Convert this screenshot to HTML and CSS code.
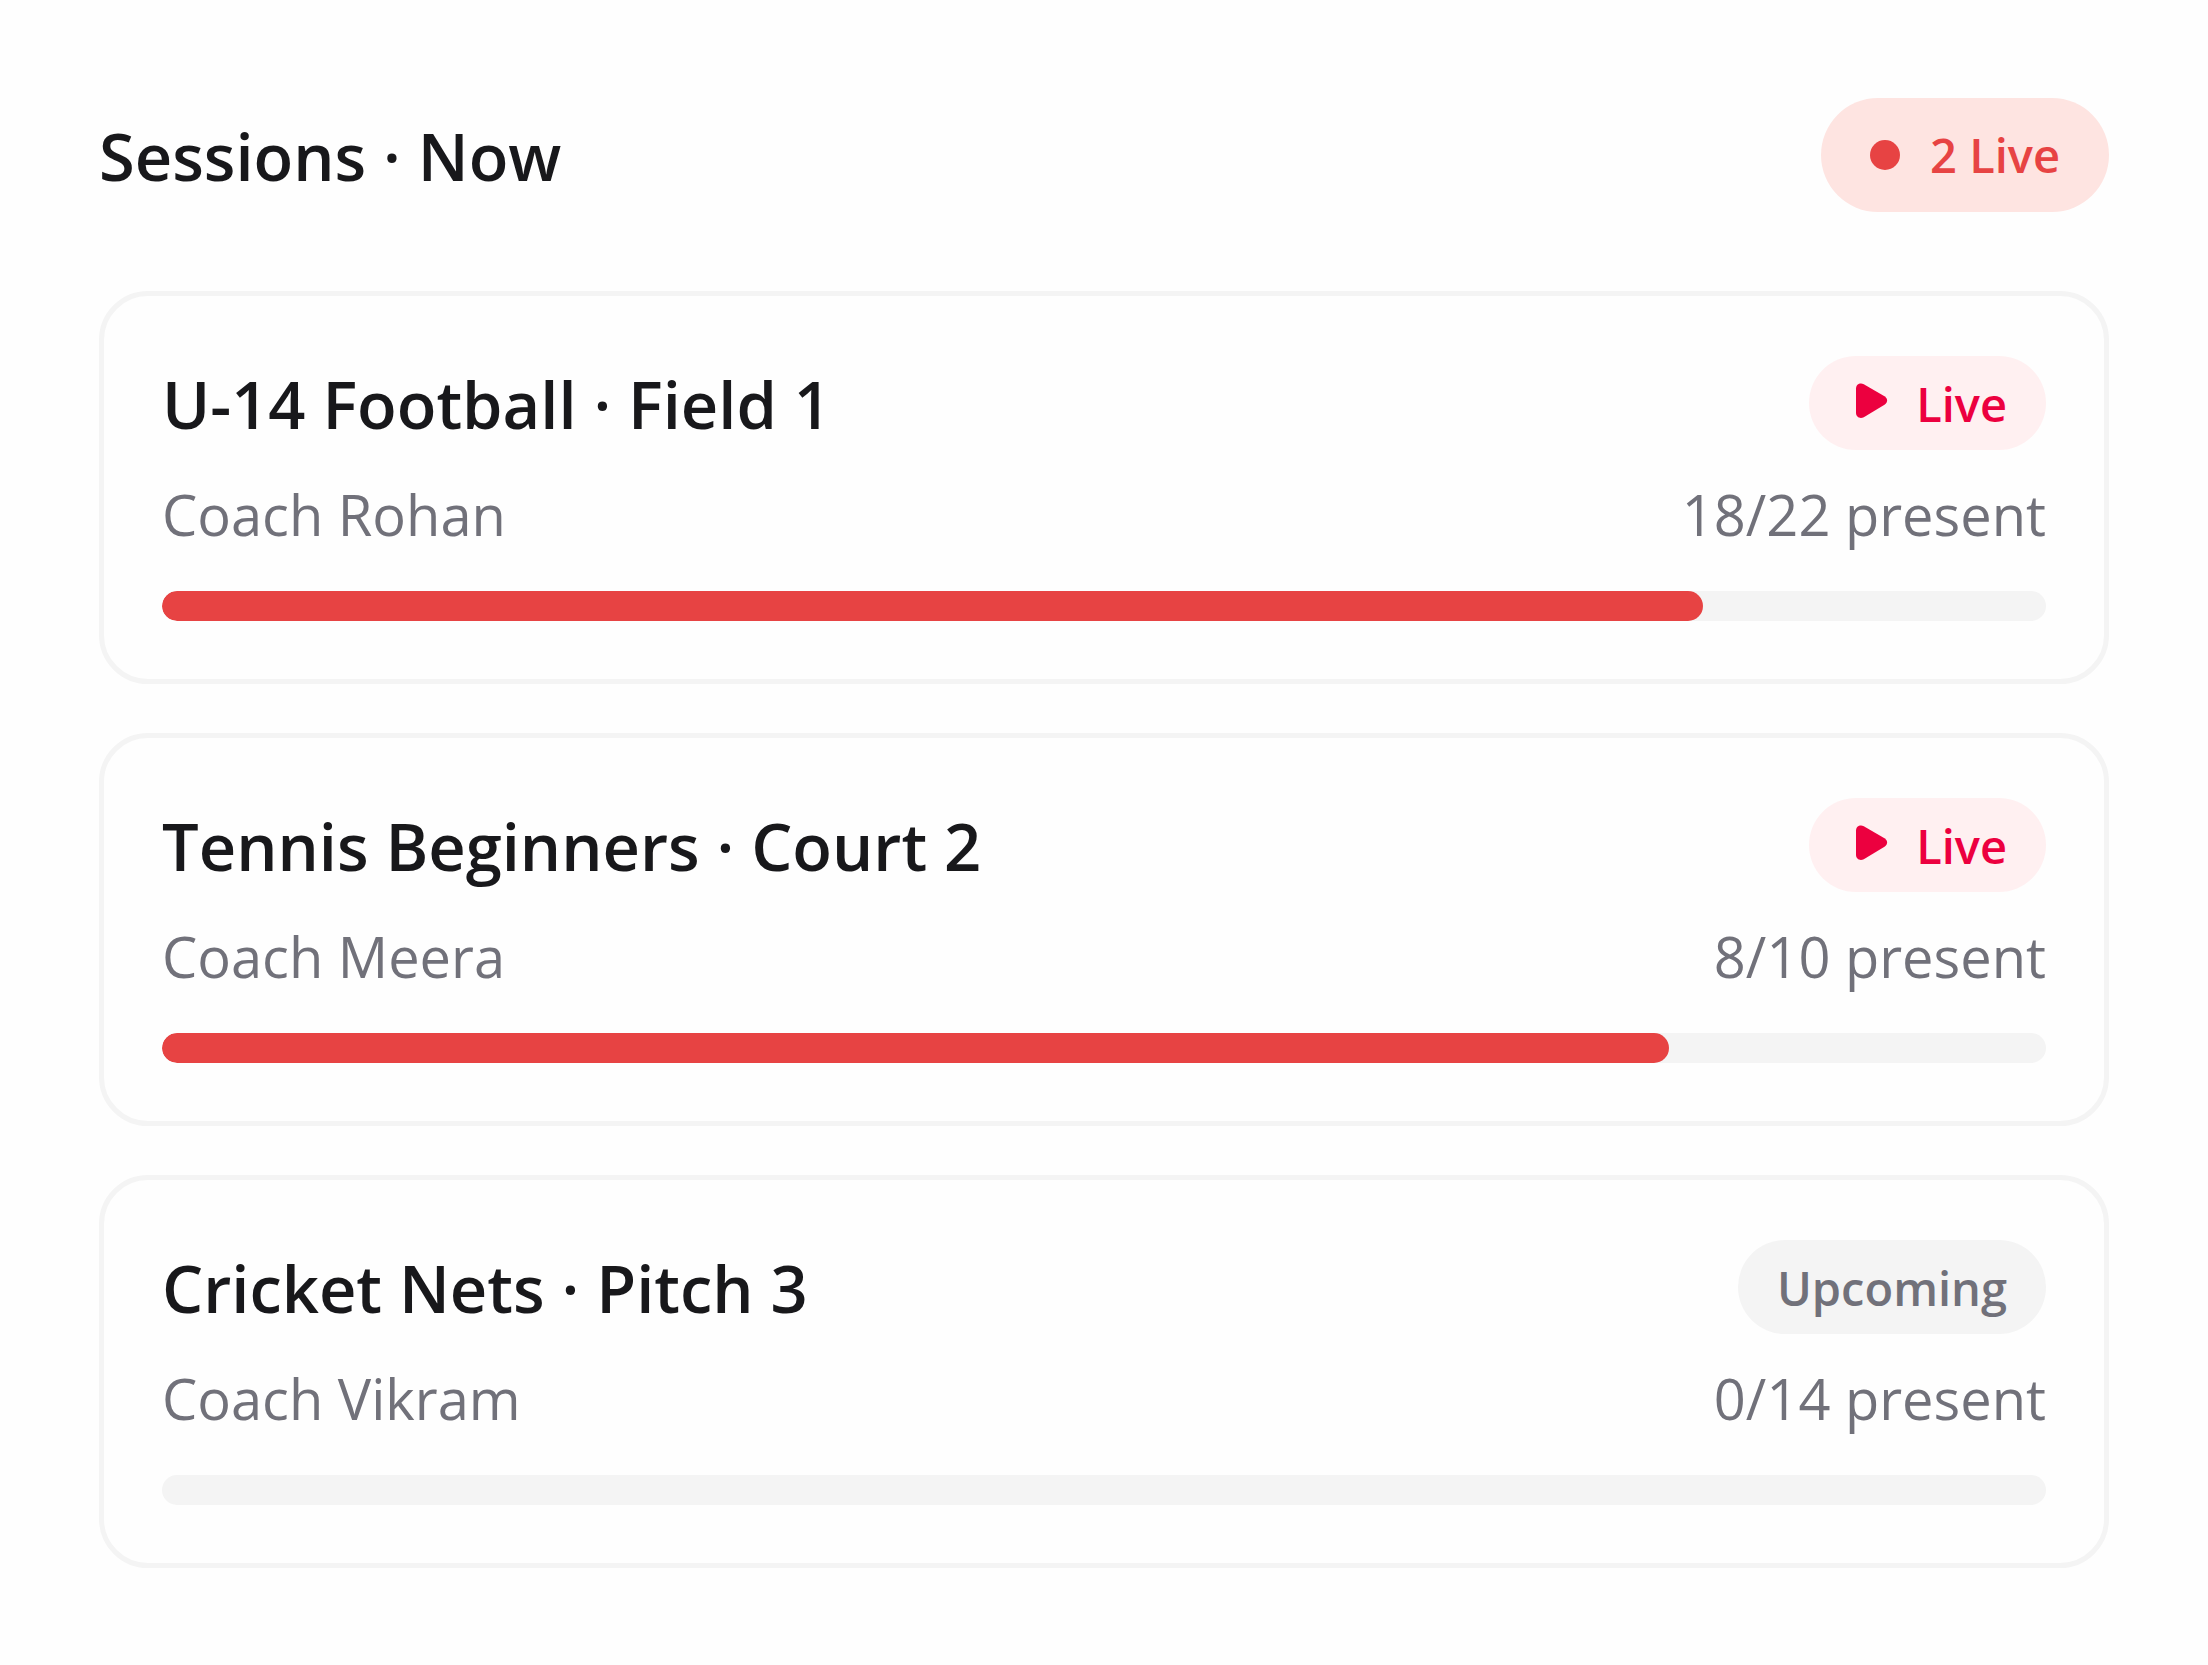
FILE: index.html
```html
<!DOCTYPE html>
<html lang="en">
<head>
  <meta charset="utf-8">
  <title>Sessions</title>
  <link rel="stylesheet" href="styles.css">
</head>
<body>
  <main class="sessions">
    <header class="sessions-header">
      <h1 class="title">Sessions · Now</h1>
      <span class="live-count"><span class="dot"></span>2 Live</span>
    </header>

    <section class="card">
      <div class="row">
        <h2 class="title">U-14 Football · Field 1</h2>
        <span class="badge badge-live">
          <svg class="play" viewBox="0 0 48 48" aria-hidden="true"><path d="M8 8.500C8 4.500 12 2.300 15.800 4.200L36.500 16.300C40 18.500 40 22.500 36.500 24.700L15.800 37.200C12 39.200 8 37 8 33Z"/></svg>
          Live
        </span>
      </div>
      <div class="row details">
        <span>Coach Rohan</span>
        <span>18/22 present</span>
      </div>
      <div class="bar"><div class="fill" style="width: 81.8%"></div></div>
    </section>

    <section class="card">
      <div class="row">
        <h2 class="title">Tennis Beginners · Court 2</h2>
        <span class="badge badge-live">
          <svg class="play" viewBox="0 0 48 48" aria-hidden="true"><path d="M8 8.500C8 4.500 12 2.300 15.800 4.200L36.500 16.300C40 18.500 40 22.500 36.500 24.700L15.800 37.200C12 39.200 8 37 8 33Z"/></svg>
          Live
        </span>
      </div>
      <div class="row details">
        <span>Coach Meera</span>
        <span>8/10 present</span>
      </div>
      <div class="bar"><div class="fill" style="width: 80%"></div></div>
    </section>

    <section class="card">
      <div class="row">
        <h2 class="title">Cricket Nets · Pitch 3</h2>
        <span class="badge badge-upcoming">Upcoming</span>
      </div>
      <div class="row details">
        <span>Coach Vikram</span>
        <span>0/14 present</span>
      </div>
      <div class="bar"><div class="fill" style="width: 0%"></div></div>
    </section>
  </main>
</body>
</html>
```

FILE: styles.css
```css
* {
  box-sizing: border-box;
}

body {
  margin: 0;
  background-color: #fefefe;
  color: #18181b;
  font-family: "Segoe UI", "Open Sans", "Noto Sans", sans-serif;
}

.sessions {
  display: flex;
  flex-direction: column;
  gap: 49px;
  padding: 98px 99px;
}

.sessions-header {
  display: flex;
  align-items: center;
  justify-content: space-between;
  margin-bottom: 30px;
}

.title {
  margin: 0;
  padding-top: 2px;
  font-size: 65px;
  line-height: 92px;
  font-weight: 600;
}

.live-count {
  display: flex;
  align-items: center;
  gap: 30px;
  padding: 22px 49px;
  border-radius: 57px;
  background-color: #fee4e1;
  color: #e74343;
  font-size: 47px;
  line-height: 70px;
  font-weight: 600;
}

.dot {
  width: 30px;
  height: 30px;
  border-radius: 50%;
  background-color: #e74343;
}

.card {
  padding: 60px 58px 58px;
  border: 5px solid #f4f4f4;
  border-radius: 49px;
}

.row {
  display: flex;
  align-items: center;
  justify-content: space-between;
}

.details {
  margin: 22px 0 35px;
  color: #71717a;
  font-size: 56px;
  line-height: 84px;
}

.badge {
  display: flex;
  align-items: center;
  gap: 20px;
  padding: 13px 39px 11px;
  border-radius: 47px;
  font-size: 47px;
  line-height: 70px;
  font-weight: 600;
}

.badge-live {
  background-color: #fff0f1;
  color: #ec003f;
}

.badge-upcoming {
  background-color: #f4f4f4;
  color: #71717a;
}

.play {
  width: 48px;
  height: 48px;
  fill: currentColor;
}

.bar {
  height: 30px;
  border-radius: 15px;
  background-color: #f4f4f4;
  overflow: hidden;
}

.fill {
  height: 100%;
  border-radius: 15px;
  background-color: #e74343;
}
```
